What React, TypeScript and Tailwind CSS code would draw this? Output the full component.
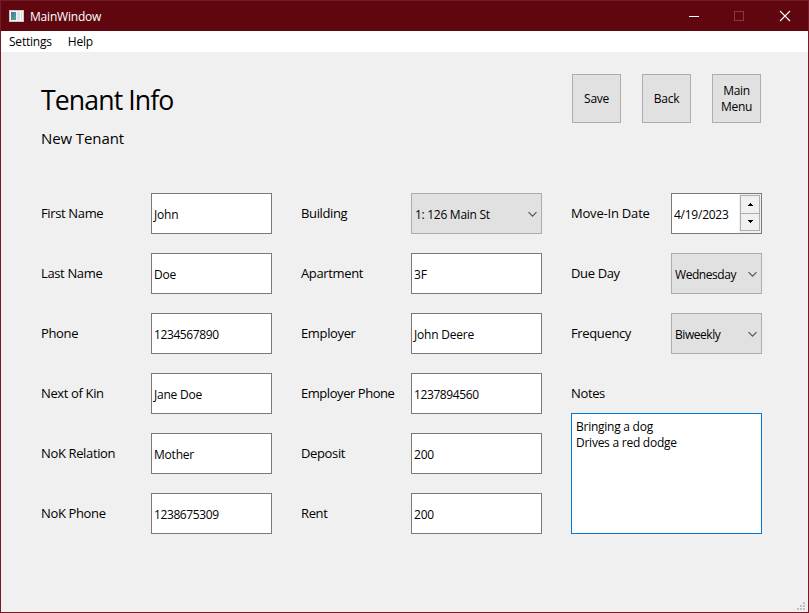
import type { ReactNode } from "react";

function Label({ children, tracking = "tracking-[-0.36px]" }: { children: ReactNode; tracking?: string }) {
  return (
    <div className={`flex h-[41px] items-center whitespace-nowrap pb-[2px] text-[13px] ${tracking}`}>
      {children}
    </div>
  );
}

function Input({ value }: { value: string }) {
  const tracking = /^\d{4,}$/.test(value) ? "tracking-[-0.4px]" : "tracking-[-0.22px]";
  return (
    <div
      className={`flex h-[41px] items-center whitespace-nowrap border border-[#7a7a7a] bg-white pt-[3px] pl-[2px] ${tracking}`}
    >
      {value}
    </div>
  );
}

function Select({ value, tracking = "tracking-[-0.45px]" }: { value: string; tracking?: string }) {
  return (
    <div
      className={`flex h-[41px] items-center justify-between whitespace-nowrap border border-[#adadad] bg-[#e1e1e1] pt-[2px] pr-[3px] pl-[3px] ${tracking}`}
    >
      <span>{value}</span>
      <svg width="11" height="7" viewBox="0 0 11 7" fill="none" stroke="#555" strokeWidth="1.2">
        <path d="M1.5 1.2 5.5 5.2 9.5 1.2" />
      </svg>
    </div>
  );
}

function DateInput({ value }: { value: string }) {
  return (
    <div className="flex h-[41px] justify-between border border-[#7a7a7a] bg-white pl-[2px]">
      <span className="flex items-center pt-[2px] tracking-[-0.25px]">{value}</span>
      <div className="flex w-[22px] flex-col bg-[#f0f0f0] pt-px pr-px pb-[2px] pl-px">
        <div className="flex h-[19px] items-center justify-center border border-[#adadad]">
          <svg width="5" height="3" viewBox="0 0 5 3" shapeRendering="crispEdges">
            <path d="M2 0h1v1h1v1h1v1H0V2h1V1h1z" />
          </svg>
        </div>
        <div className="-mt-px flex h-[18px] items-center justify-center border border-[#adadad] pb-[2px]">
          <svg width="5" height="3" viewBox="0 0 5 3" shapeRendering="crispEdges">
            <path d="M0 0h5v1H4v1H3v1H2V2H1V1H0z" />
          </svg>
        </div>
      </div>
    </div>
  );
}

function Button({ children }: { children: ReactNode }) {
  return (
    <button className="flex size-[49px] items-center justify-center border border-[#adadad] bg-[#e1e1e1] pt-px text-center leading-4 tracking-[-0.3px]">
      {children}
    </button>
  );
}

const personal = [
  ["First Name", "John"],
  ["Last Name", "Doe"],
  ["Phone", "1234567890"],
  ["Next of Kin", "Jane Doe"],
  ["NoK Relation", "Mother"],
  ["NoK Phone", "1238675309"],
];

const housing = [
  ["Apartment", "3F"],
  ["Employer", "John Deere"],
  ["Employer Phone", "1237894560"],
  ["Deposit", "200"],
  ["Rent", "200"],
];

function Row({ label, tracking, children }: { label: string; tracking?: string; children: ReactNode }) {
  return (
    <>
      <Label tracking={tracking}>{label}</Label>
      {children}
    </>
  );
}

export default function App() {
  return (
    <div className="flex h-[613px] w-[809px] flex-col border border-[#741b27] bg-[#f0f0f0] font-['Open_Sans','Noto_Sans',sans-serif] text-[12px] leading-4 text-black">
      <header className="flex h-[30px] shrink-0 items-center bg-[#60060f] pl-2 text-white">
        <svg width="15" height="12" viewBox="0 0 15 12" shapeRendering="crispEdges">
          <defs>
            <linearGradient id="pane" x1="0" y1="0" x2="1" y2="1">
              <stop offset="0" stopColor="#4474a8" />
              <stop offset="1" stopColor="#59a982" />
            </linearGradient>
          </defs>
          <path fill="#c9c9c9" d="M0 0h15v12H0z" />
          <path fill="#f5f5f5" d="M1 1h13v10H1z" />
          <path fill="url(#pane)" d="M2 2h5v8H2z" />
          <path fill="#dde3e1" d="M8 2h3v8H8z" />
          <path fill="#cfdcd8" d="M12 2h1v8h-1z" />
        </svg>
        <span className="ml-[6px] pt-px tracking-[-0.2px]">MainWindow</span>
        <div className="ml-auto flex items-center pr-[17px]">
          <svg width="103" height="12" viewBox="0 0 103 12" fill="none">
            <path stroke="#fff" d="M1 6.5h10" shapeRendering="crispEdges" />
            <path stroke="#873b43" d="M46.5 1.5h9v9h-9z" shapeRendering="crispEdges" />
            <path stroke="#fff" strokeWidth="1.1" d="m92 1 10 10m0-10L92 11" />
          </svg>
        </div>
      </header>
      <nav className="flex h-[21px] shrink-0 items-center gap-4 bg-white pt-px pl-2 tracking-[-0.22px]">
        <span>Settings</span>
        <span>Help</span>
      </nav>
      <main className="flex grow flex-col px-10 pt-[22px]">
        <div className="flex h-[119px] justify-between">
          <div>
            <h1 className="mt-[8px] text-[26.67px] leading-9 tracking-[-0.9px]">Tenant Info</h1>
            <h2 className="mt-[10px] text-[15px] leading-5 tracking-[-0.1px]">New Tenant</h2>
          </div>
          <div className="mr-[7px] flex gap-[21px]">
            <Button>Save</Button>
            <Button>Back</Button>
            <Button>
              Main
              <br />
              Menu
            </Button>
          </div>
        </div>
        <div className="flex gap-[29px]">
          <section className="grid grid-cols-[110px_121px] content-start gap-y-[19px]">
            {personal.map(([label, value]) => (
              <Row key={label} label={label}>
                <Input value={value} />
              </Row>
            ))}
          </section>
          <section className="grid grid-cols-[110px_131px] content-start gap-y-[19px]">
            <Row label="Building">
              <Select value="1: 126 Main St" tracking="tracking-[-0.28px]" />
            </Row>
            {housing.map(([label, value]) => (
              <Row key={label} label={label} tracking={label === "Employer Phone" ? "tracking-[-0.45px]" : undefined}>
                <Input value={value} />
              </Row>
            ))}
          </section>
          <section className="w-[191px]">
            <div className="grid grid-cols-[100px_91px] gap-y-[19px]">
              <Row label="Move-In Date" tracking="tracking-[-0.2px]">
                <DateInput value="4/19/2023" />
              </Row>
              <Row label="Due Day">
                <Select value="Wednesday" />
              </Row>
              <Row label="Frequency">
                <Select value="Biweekly" />
              </Row>
              <Label>Notes</Label>
            </div>
            <div className="-mt-px h-[121px] border border-[#0078d7] bg-white py-[5px] pl-1 tracking-[-0.25px]">
              <p>Bringing a dog</p>
              <p>Drives a red dodge</p>
            </div>
          </section>
        </div>
      </main>
      <footer className="flex justify-end pr-[3px] pb-[2px]">
        <svg width="8" height="8" viewBox="0 0 8 8" fill="#bfbfbf" shapeRendering="crispEdges">
          <path d="M6 0h2v2H6zM3 3h2v2H3zM6 3h2v2H6zM0 6h2v2H0zM3 6h2v2H3zM6 6h2v2H6z" />
        </svg>
      </footer>
    </div>
  );
}
